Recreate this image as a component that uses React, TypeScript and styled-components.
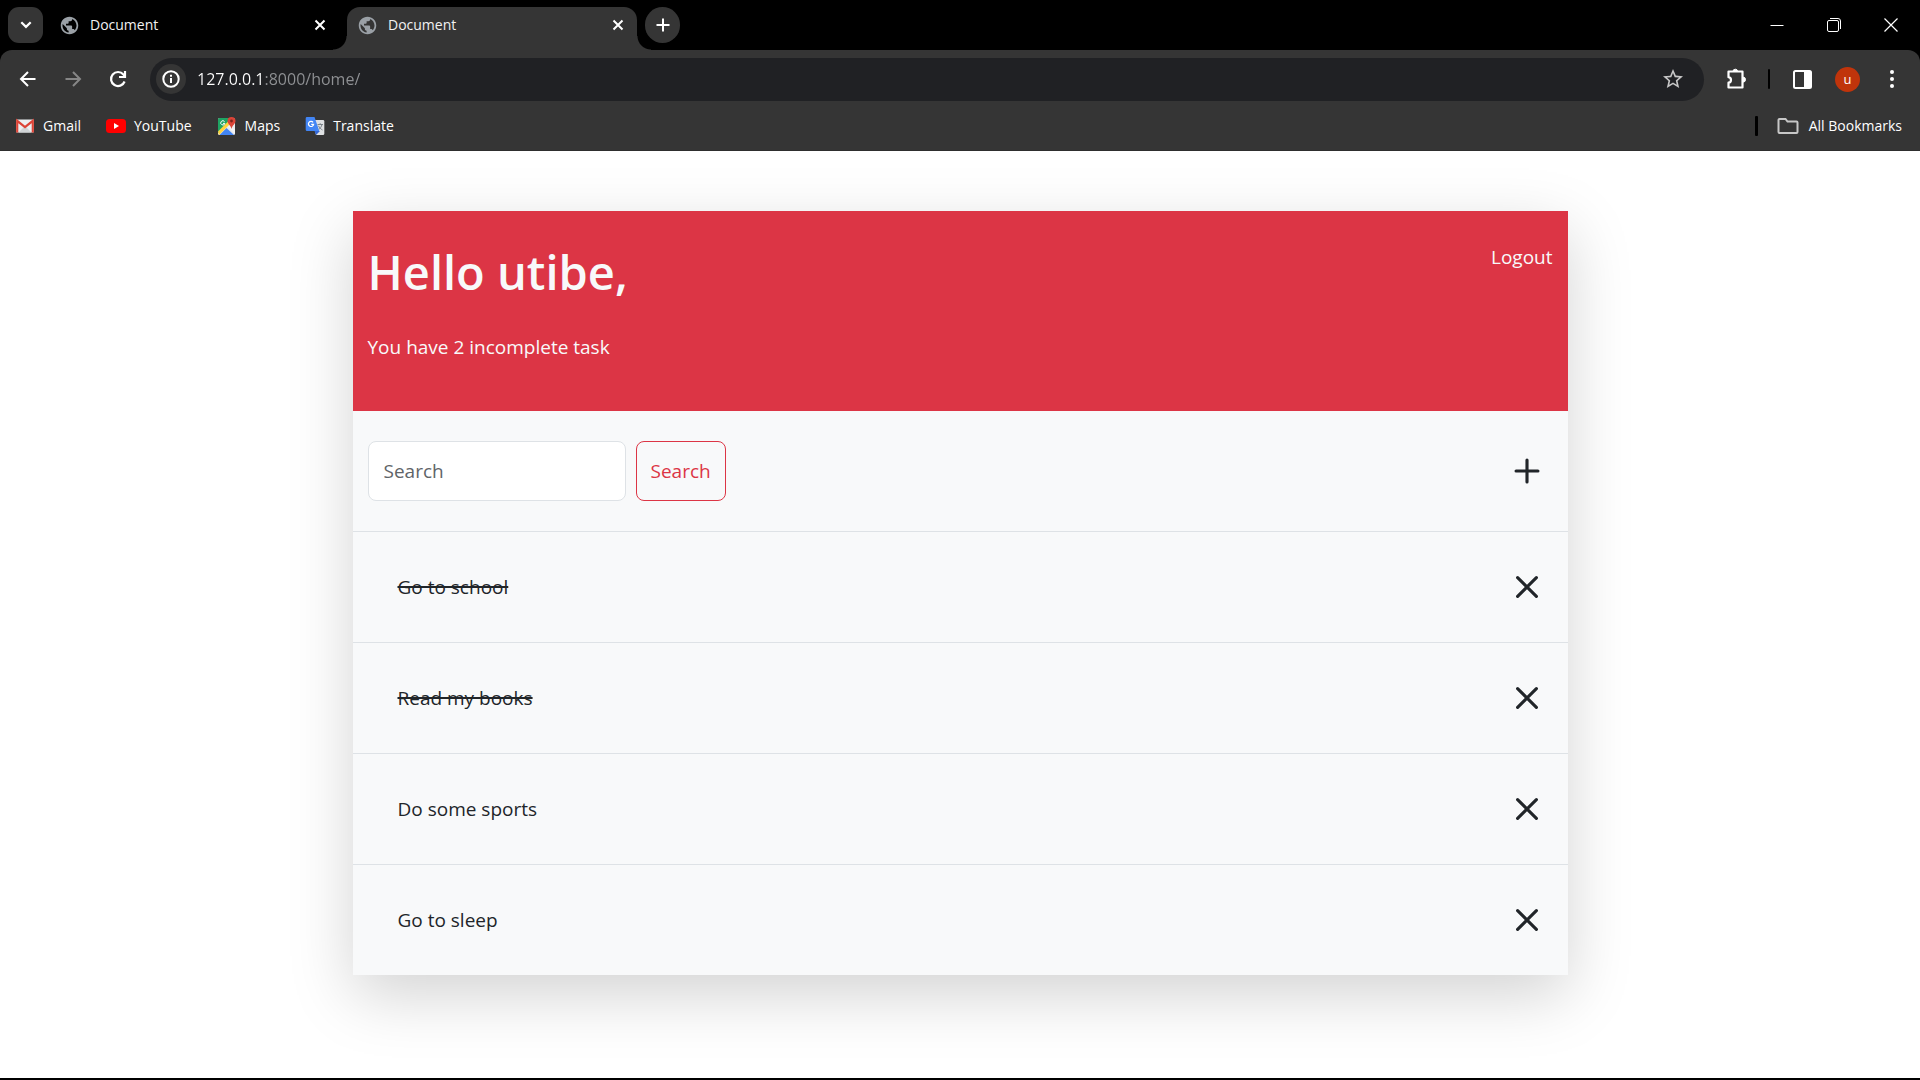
import React, { useState } from "react";
import styled, { createGlobalStyle, css } from "styled-components";
import { BsPlus, BsX } from "react-icons/bs";
import { MdPublic, MdStarBorder } from "react-icons/md";

const CHROME = "#353535";

const GlobalStyle = createGlobalStyle`
  *, *::before, *::after { box-sizing: border-box; }
  body { margin: 0; background: #fff; font-family: "Open Sans", "Noto Sans", sans-serif; }
  button, input { font-family: inherit; }
  button { cursor: pointer; }
  h1, p, ul { margin: 0; padding: 0; }
  svg { display: block; flex: none; }
`;

const Window = styled.div`
  display: flex;
  flex-direction: column;
  min-height: 100vh;
  border-bottom: 2px solid #000;
`;

const Browser = styled.header`
  background: #000;
  color: #fff;
`;

const TabStrip = styled.div`
  display: flex;
  align-items: flex-start;
  height: 50px;
  padding: 7px 0 0 8px;
`;

const plainButton = css`
  display: flex;
  align-items: center;
  justify-content: center;
  padding: 0;
  border: 0;
  background: transparent;
  color: inherit;
`;

const StripButton = styled.button<{ $round?: boolean }>`
  ${plainButton}
  flex: none;
  width: 35px;
  height: 36px;
  border-radius: ${(p) => (p.$round ? "18px" : "11px")};
  background: ${CHROME};
`;

const TabList = styled.div`
  display: flex;
  gap: 8px;
  margin: 0 8px 0 6px;
`;

const Tab = styled.div<{ $active?: boolean }>`
  position: relative;
  display: flex;
  align-items: center;
  width: 290px;
  height: 43px;
  padding: 0 11px 7px 10px;
  border-radius: 13px 13px 0 0;
  background: ${(p) => (p.$active ? CHROME : "transparent")};
  color: #9aa0a6;

  ${(p) =>
    p.$active &&
    css`
      &::before,
      &::after {
        content: "";
        position: absolute;
        bottom: 0;
        width: 14px;
        height: 14px;
      }
      &::before {
        left: -14px;
        background: radial-gradient(circle at 0 0, transparent 13px, ${CHROME} 14px);
      }
      &::after {
        right: -14px;
        background: radial-gradient(circle at 100% 0, transparent 13px, ${CHROME} 14px);
      }
    `}
`;

const TabTitle = styled.span`
  flex: 1;
  margin-left: 10px;
  font-size: 14px;
  line-height: 20px;
  color: #f1f1f1;
`;

const TabClose = styled.button`
  ${plainButton}
  width: 16px;
  height: 16px;
  color: #fff;
`;

const WindowControls = styled.div`
  display: flex;
  gap: 41px;
  margin: 10px 21px 0 auto;
`;

const ControlButton = styled.button`
  ${plainButton}
  width: 16px;
  height: 16px;
`;

const Toolbar = styled.div`
  display: flex;
  align-items: center;
  height: 57px;
  padding: 1px 16px 0 16px;
  border-radius: 12px 12px 0 0;
  background: ${CHROME};
`;

const NavButtons = styled.nav`
  display: flex;
  gap: 21px;
  margin-right: 20px;
`;

const ToolButton = styled.button<{ $dim?: boolean }>`
  ${plainButton}
  width: 24px;
  height: 24px;
  color: ${(p) => (p.$dim ? "#868686" : "#fff")};
`;

const AddressBar = styled.div`
  display: flex;
  flex: 1;
  align-items: center;
  height: 43px;
  padding: 0 19px 0 6px;
  border-radius: 22px;
  background: #202124;
`;

const SiteInfo = styled.button`
  ${plainButton}
  width: 30px;
  height: 30px;
  border-radius: 50%;
  background: ${CHROME};
`;

const Address = styled.input`
  flex: 1;
  min-width: 0;
  height: 30px;
  margin-left: 11px;
  padding: 0;
  border: 0;
  outline: 0;
  font-size: 16px;
  color: transparent;
  background: linear-gradient(90deg, #fff 68px, #8f9194 68px);
  background-clip: text;
  -webkit-background-clip: text;
`;

const ToolGroup = styled.div`
  display: flex;
  align-items: center;
  margin-left: 20px;
`;

const Divider = styled.span<{ $wide?: boolean }>`
  width: ${(p) => (p.$wide ? "3px" : "2px")};
  height: 20px;
  border-radius: 1px;
  background: #000;
`;

const Avatar = styled.button`
  ${plainButton}
  width: 25px;
  height: 25px;
  margin: 0 20px 0 21px;
  border-radius: 50%;
  background: #c0340b;
  font-size: 13px;
  line-height: 20px;
`;

const Bookmarks = styled.nav`
  display: flex;
  align-items: center;
  height: 44px;
  padding: 0 18px 6px 15px;
  border-bottom: 1px solid #2e2e2e;
  background: ${CHROME};
`;

const Bookmark = styled.a`
  display: flex;
  align-items: center;
  gap: 8px;
  margin-right: 25px;
  font-size: 14px;
  line-height: 20px;
  white-space: nowrap;
  color: #fff;
  text-decoration: none;
`;

const AllBookmarks = styled.button`
  ${plainButton}
  gap: 10px;
  margin-left: 19px;
  font-size: 14px;
  line-height: 20px;
  white-space: nowrap;
`;

const Spacer = styled.span`
  flex: 1;
`;

const Page = styled.main`
  flex: 1;
  padding: 60px 16px;
`;

const Card = styled.section`
  max-width: 1215px;
  margin: 0 auto;
  background: #f8f9fa;
  box-shadow: 0 20px 60px rgba(0, 0, 0, 0.175);
  font-size: 19px;
  line-height: 30px;
  color: #212529;
`;

const Banner = styled.div`
  display: flex;
  justify-content: space-between;
  align-items: flex-start;
  padding: 31px 15px 49px;
  background: #dc3545;
  color: #f8f9fa;
`;

const Greeting = styled.h1`
  margin-bottom: 30px;
  font-size: 47px;
  font-weight: 600;
  line-height: 60px;
`;

const Logout = styled.a`
  color: #f8f9fa;
  text-decoration: none;
`;

const Actions = styled.div`
  display: flex;
  align-items: center;
  justify-content: space-between;
  padding: 30px 16px 30px 15px;
`;

const SearchForm = styled.form`
  display: flex;
  gap: 10px;
`;

const SearchInput = styled.input`
  width: 258px;
  height: 60px;
  padding: 0 15px;
  border: 1px solid #dee2e6;
  border-radius: 8px;
  background: #fff;
  font-size: 19px;
  color: #212529;

  &::placeholder {
    color: #5f6468;
    opacity: 1;
  }
`;

const SearchButton = styled.button`
  height: 60px;
  padding: 0 14px;
  border: 1px solid #dc3545;
  border-radius: 8px;
  background: transparent;
  font-size: 19px;
  color: #dc3545;
`;

const IconButton = styled.button`
  ${plainButton}
  width: 50px;
  height: 50px;
`;

const TaskList = styled.ul`
  list-style: none;
`;

const TaskRow = styled.li`
  display: flex;
  align-items: center;
  justify-content: space-between;
  padding: 30px 16px 30px 45px;
  border-top: 1px solid #dee2e6;
`;

const TaskLink = styled.a<{ $done: boolean }>`
  color: inherit;
  text-decoration: ${(p) => (p.$done ? "line-through 2px" : "none")};
`;

const CrossIcon = () => (
  <svg width="12" height="12" viewBox="0 0 12 12" stroke="currentColor" strokeWidth="2">
    <path d="M1.5 1.5l9 9M10.5 1.5l-9 9" />
  </svg>
);

const ChevronIcon = () => (
  <svg width="12" height="8" viewBox="0 0 12 8" fill="none" stroke="#fff" strokeWidth="2.2">
    <path d="M1.3 1.2L6 5.9l4.7-4.7" />
  </svg>
);

const PlusIcon = () => (
  <svg width="14" height="14" viewBox="0 0 14 14" stroke="#fff" strokeWidth="2">
    <path d="M7 .5v13M.5 7h13" />
  </svg>
);

const ArrowIcon = ({ flip }: { flip?: boolean }) => (
  <svg width="24" height="24" viewBox="0 0 24 24" fill="none" stroke="currentColor" strokeWidth="2">
    <path d={flip ? "M4.5 12h14M12 5l7 7-7 7" : "M19.5 12h-14M12 5l-7 7 7 7"} />
  </svg>
);

const ReloadIcon = () => (
  <svg width="24" height="24" viewBox="0 0 24 24" fill="none" stroke="#fff" strokeWidth="2.2">
    <path d="M18.6 14.5A7 7 0 1 1 17.4 7.5L19 9.2" />
    <path d="M19 4v6h-6" />
  </svg>
);

const InfoIcon = () => (
  <svg width="18" height="18" viewBox="0 0 18 18" fill="none" stroke="#fff" strokeWidth="2">
    <circle cx="9" cy="9" r="7.7" />
    <path d="M9 8v5M9 4.8v2" />
  </svg>
);

const PuzzleIcon = () => (
  <svg width="24" height="24" viewBox="0 0 24 24" fill="none">
    <path
      d="M4.5 4.5h14v16h-14v-4.800c3.300-.4 3.300-5.100 0-5.500z"
      stroke="#fff"
      strokeWidth="2.2"
      strokeLinejoin="round"
    />
    <path d="M9 4.500a2.300 2.300 0 0 1 4.600 0zM19 10.100a2.500 2.500 0 0 1 0 5z" fill="#fff" stroke="#fff" />
  </svg>
);

const PanelIcon = () => (
  <svg width="19" height="19" viewBox="0 0 19 19" fill="none">
    <rect x="1" y="1" width="17" height="17" rx="1.5" stroke="#fff" strokeWidth="2" />
    <path d="M11 1h7v17h-7z" fill="#fff" />
  </svg>
);

const DotsIcon = () => (
  <svg width="4" height="18" viewBox="0 0 4 18" fill="#fff">
    <circle cx="2" cy="2" r="2" />
    <circle cx="2" cy="9" r="2" />
    <circle cx="2" cy="16" r="2" />
  </svg>
);

const FolderIcon = () => (
  <svg width="22" height="18" viewBox="0 0 22 18" fill="none" stroke="#c7c7c7" strokeWidth="2">
    <path d="M2.5 2h6l2 2.500h9a1 1 0 0 1 1 1V15a1 1 0 0 1-1 1h-17a1 1 0 0 1-1-1V3a1 1 0 0 1 1-1z" />
  </svg>
);

const GmailIcon = () => (
  <svg width="20" height="20" viewBox="0 0 20 20">
    <path d="M2 3.500h16a1 1 0 0 1 1 1v11a1 1 0 0 1-1 1H2a1 1 0 0 1-1-1v-11a1 1 0 0 1 1-1z" fill="#eceff1" />
    <path d="M3.500 16.500l6.500-6.500 6.500 6.500z" fill="#d0d3d5" />
    <path d="M2.200 16.500V4.800l7.800 6.400 7.800-6.400v11.700" fill="none" stroke="#dc4437" strokeWidth="2.2" />
  </svg>
);

const YouTubeIcon = () => (
  <svg width="20" height="20" viewBox="0 0 20 20">
    <rect y="3" width="20" height="14" rx="3.5" fill="#f00" />
    <path d="M8 7l5 3-5 3z" fill="#fff" />
  </svg>
);

const MapsIcon = () => (
  <svg width="20" height="20" viewBox="0 0 20 20">
    <rect x="1" y="2" width="17" height="17" rx="1.5" fill="#e8eaed" />
    <path d="M1 3.500A1.500 1.500 0 0 1 2.500 2H12v4L1 17z" fill="#1fa463" />
    <path d="M2.500 19L9.500 12l7.500 7z" fill="#4285f4" />
    <path d="M1 15.500L12.500 4v4.500L2 19z" fill="#ffd33e" />
    <path d="M11 10.500l2-1.500 5 5v4z" fill="#f3f3f3" />
    <path d="M7.600 5.700A2.100 2.100 0 1 0 7.900 7.400H6" fill="none" stroke="#fff" strokeWidth="1" />
    <path d="M14.500 1a4 4 0 0 1 4 4c0 3-3.300 4-4 8-.7-4-4-5-4-8a4 4 0 0 1 4-4z" fill="#db4437" />
    <circle cx="14.500" cy="5" r="1.4" fill="#7b231c" />
  </svg>
);

const TranslateIcon = () => (
  <svg width="20" height="20" viewBox="0 0 20 20">
    <path d="M7 4h11a1.300 1.300 0 0 1 1.300 1.300v12.400A1.300 1.300 0 0 1 18 19h-7z" fill="#dfe1e3" />
    <path d="M11 19l4-4H9.500z" fill="#3367d6" />
    <path d="M2 1h7.500l4.800 14H2a1.300 1.300 0 0 1-1.300-1.300V2.300A1.300 1.300 0 0 1 2 1z" fill="#4285f4" />
    <path d="M8.100 6.300A2.600 2.600 0 1 0 8.600 8.300H6.200" fill="none" stroke="#fff" strokeWidth="1.2" />
    <path d="M12.500 8.500h5.500M15.200 7.200v1.300M17 8.500c-.6 2.500-2 4-3 4.800M13.500 9.800c.8 2 2.500 3.300 4 4.200" fill="none" stroke="#7a8288" />
  </svg>
);

const bookmarks = [
  { label: "Gmail", icon: <GmailIcon /> },
  { label: "YouTube", icon: <YouTubeIcon /> },
  { label: "Maps", icon: <MapsIcon /> },
  { label: "Translate", icon: <TranslateIcon /> },
];

const initialTasks = [
  { id: 1, title: "Go to school", done: true },
  { id: 2, title: "Read my books", done: true },
  { id: 3, title: "Do some sports", done: false },
  { id: 4, title: "Go to sleep", done: false },
];

function BrowserTab({ title, active }: { title: string; active?: boolean }) {
  return (
    <Tab $active={active}>
      <MdPublic size={21} />
      <TabTitle>{title}</TabTitle>
      <TabClose aria-label="Close tab">
        <CrossIcon />
      </TabClose>
    </Tab>
  );
}

function BrowserChrome() {
  return (
    <Browser>
      <TabStrip>
        <StripButton aria-label="Search tabs">
          <ChevronIcon />
        </StripButton>
        <TabList>
          <BrowserTab title="Document" />
          <BrowserTab title="Document" active />
        </TabList>
        <StripButton $round aria-label="New tab">
          <PlusIcon />
        </StripButton>
        <WindowControls>
          <ControlButton aria-label="Minimize">
            <svg width="14" height="14" viewBox="0 0 14 14" stroke="#fff">
              <path d="M.5 7.500h13" />
            </svg>
          </ControlButton>
          <ControlButton aria-label="Restore">
            <svg width="14" height="14" viewBox="0 0 14 14" fill="none" stroke="#fff">
              <rect x=".5" y="2.5" width="11" height="11" rx="1.5" />
              <path d="M3 .5h8a2.500 2.500 0 0 1 2.500 2.500v8" />
            </svg>
          </ControlButton>
          <ControlButton aria-label="Close">
            <svg width="14" height="14" viewBox="0 0 14 14" stroke="#fff" strokeWidth="1.2">
              <path d="M.5.5l13 13M13.500.5l-13 13" />
            </svg>
          </ControlButton>
        </WindowControls>
      </TabStrip>
      <Toolbar>
        <NavButtons aria-label="History">
          <ToolButton aria-label="Back">
            <ArrowIcon />
          </ToolButton>
          <ToolButton $dim aria-label="Forward">
            <ArrowIcon flip />
          </ToolButton>
          <ToolButton aria-label="Reload">
            <ReloadIcon />
          </ToolButton>
        </NavButtons>
        <AddressBar>
          <SiteInfo aria-label="Site information">
            <InfoIcon />
          </SiteInfo>
          <Address aria-label="Address" defaultValue="127.0.0.1:8000/home/" spellCheck={false} />
          <ToolButton aria-label="Bookmark this page">
            <MdStarBorder size={24} color="#c7c7c7" />
          </ToolButton>
        </AddressBar>
        <ToolGroup>
          <ToolButton aria-label="Extensions">
            <PuzzleIcon />
          </ToolButton>
          <ToolGroup>
            <Divider />
          </ToolGroup>
          <ToolGroup>
            <ToolButton aria-label="Side panel">
              <PanelIcon />
            </ToolButton>
          </ToolGroup>
          <Avatar aria-label="Profile">u</Avatar>
          <ToolButton aria-label="Menu">
            <DotsIcon />
          </ToolButton>
        </ToolGroup>
      </Toolbar>
      <Bookmarks aria-label="Bookmarks">
        {bookmarks.map((b) => (
          <Bookmark key={b.label} href="#">
            {b.icon}
            {b.label}
          </Bookmark>
        ))}
        <Spacer />
        <Divider $wide />
        <AllBookmarks>
          <FolderIcon />
          All Bookmarks
        </AllBookmarks>
      </Bookmarks>
    </Browser>
  );
}

export default function App() {
  const [tasks, setTasks] = useState(initialTasks);
  const incomplete = tasks.filter((t) => !t.done).length;

  return (
    <Window>
      <GlobalStyle />
      <BrowserChrome />
      <Page>
        <Card>
          <Banner>
            <div>
              <Greeting>Hello utibe,</Greeting>
              <p>{`You have ${incomplete} incomplete task`}</p>
            </div>
            <Logout href="#">Logout</Logout>
          </Banner>
          <Actions>
            <SearchForm onSubmit={(e) => e.preventDefault()}>
              <SearchInput type="text" aria-label="Search tasks" placeholder="Search" />
              <SearchButton type="submit">Search</SearchButton>
            </SearchForm>
            <IconButton aria-label="Add task">
              <BsPlus size={50} />
            </IconButton>
          </Actions>
          <TaskList>
            {tasks.map((task) => (
              <TaskRow key={task.id}>
                <TaskLink href="#" $done={task.done}>
                  {task.title}
                </TaskLink>
                <IconButton
                  aria-label={`Delete ${task.title}`}
                  onClick={() => setTasks(tasks.filter((t) => t.id !== task.id))}
                >
                  <BsX size={50} />
                </IconButton>
              </TaskRow>
            ))}
          </TaskList>
        </Card>
      </Page>
    </Window>
  );
}
